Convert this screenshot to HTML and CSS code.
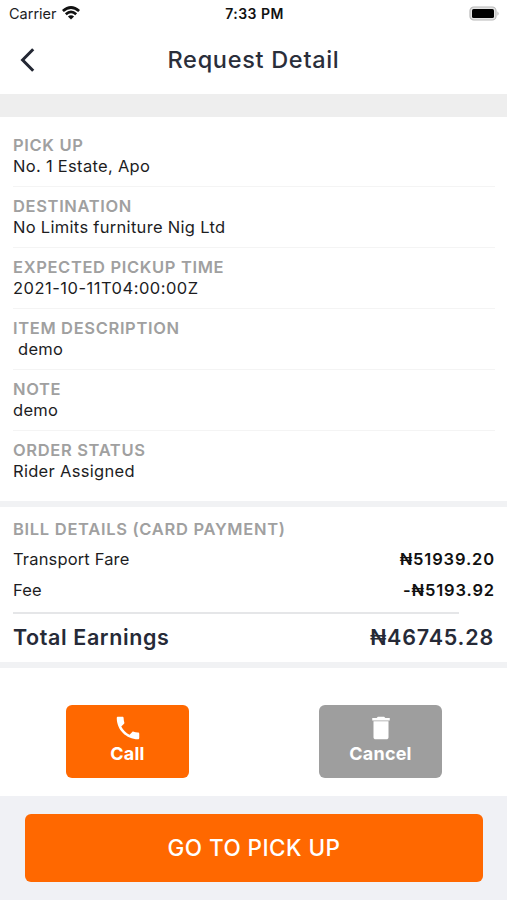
FILE: index.html
```html
<!DOCTYPE html>
<html lang="en">
<head>
<meta charset="utf-8">
<title>Request Detail</title>
<link rel="stylesheet" href="styles.css">
</head>
<body>
<div class="screen">
  <div class="status">
    <div class="carrier"><span class="carrier-name">Carrier</span>
      <svg class="wifi" width="18" height="14" viewBox="0 0 18 14"><g fill="none" stroke="#111" stroke-width="2.7"><path d="M0.9 5.1Q9 -2.1 17.1 5.1"/><path d="M3.8 8.2Q9 3.6 14.2 8.2"/></g><path fill="#111" d="M5.9 10.5Q9 7.8 12.1 10.5L9 13.6Z"/></svg>
    </div>
    <span class="time">7:33 PM</span>
    <svg class="battery" width="31" height="15" viewBox="0 0 31 15"><rect x="1" y="1" width="26" height="13" rx="3.8" fill="#e4e4e4" stroke="#b8b8b8" stroke-width="1.2"/><rect x="3" y="3" width="22" height="9" rx="1.6" fill="#000"/><path d="M28.5 5.2Q30.6 7.5 28.5 9.8Z" fill="#aaa"/></svg>
  </div>
  <header class="header">
    <svg class="back" width="16" height="26" viewBox="0 0 16 26"><path d="M14.2 2.2L3.6 13L14.2 23.8" fill="none" stroke="#232733" stroke-width="3"/></svg>
    <h1 class="title">Request Detail</h1>
  </header>
  <div class="band"></div>
  <main class="details">
    <section class="item"><h2 class="label">PICK UP</h2><p class="value">No. 1 Estate, Apo</p></section>
    <section class="item"><h2 class="label">DESTINATION</h2><p class="value">No Limits furniture Nig Ltd</p></section>
    <section class="item"><h2 class="label">EXPECTED PICKUP TIME</h2><p class="value value-date">2021-10-11T04:00:00Z</p></section>
    <section class="item"><h2 class="label">ITEM DESCRIPTION</h2><p class="value value-indent">demo</p></section>
    <section class="item"><h2 class="label">NOTE</h2><p class="value">demo</p></section>
    <section class="item"><h2 class="label">ORDER STATUS</h2><p class="value">Rider Assigned</p></section>
  </main>
  <section class="bill">
    <h2 class="label">BILL DETAILS (CARD PAYMENT)</h2>
    <div class="row"><span>Transport Fare</span><span class="amount">₦51939.20</span></div>
    <div class="row"><span>Fee</span><span class="amount">-₦5193.92</span></div>
    <div class="rule"></div>
    <div class="total"><span>Total Earnings</span><span class="sum">₦46745.28</span></div>
  </section>
  <div class="actions">
    <button class="action call"><svg width="30" height="30" viewBox="0 0 24 24"><path fill="#fff" d="M6.62 10.79c1.44 2.83 3.76 5.14 6.59 6.59l2.2-2.2c.27-.27.67-.36 1.02-.24 1.12.37 2.33.57 3.57.57.55 0 1 .45 1 1V20c0 .55-.45 1-1 1C10.61 21 3 13.39 3 4c0-.55.45-1 1-1h3.5c.55 0 1 .45 1 1 0 1.25.2 2.45.57 3.57.11.35.03.74-.25 1.02z"/></svg><span>Call</span></button>
    <button class="action cancel"><svg width="30" height="30" viewBox="0 0 24 24"><path fill="#fff" d="M6 19.5c0 .9.8 1.5 1.6 1.5h8.8c.8 0 1.6-.6 1.6-1.5V6.6H6zM19 4h-3.5l-1-1h-5l-1 1H5v2h14z"/></svg><span>Cancel</span></button>
  </div>
  <footer class="footer"><button class="go">GO TO PICK UP</button></footer>
</div>
</body>
</html>
```
FILE: styles.css
```css
* { box-sizing: border-box; }
body { margin: 0; background: #fff; color: #1d1d1f; font-family: Inter, sans-serif; }
h1, h2, p { margin: 0; }
button { border: 0; padding: 0; font-family: inherit; color: #fff; }
svg { display: block; flex: none; }
.screen { width: 507px; height: 900px; display: flex; flex-direction: column; overflow: hidden; }
.status { height: 27px; display: grid; grid-template-columns: 1fr auto 1fr; align-items: center; padding: 0 7px 0 9px; font-size: 14.5px; }
.carrier { display: flex; align-items: center; gap: 5px; }
.wifi { margin-bottom: 2px; }
.time { font-size: 14px; font-weight: 600; color: #111; letter-spacing: .45px; }
.battery { justify-self: end; }
.header { height: 67px; display: grid; grid-template-columns: 40px 1fr 40px; align-items: center; padding: 0 19px 2px; }
.title { font-size: 23.5px; line-height: 30px; font-weight: 500; letter-spacing: .7px; text-align: center; color: #2a2e3a; }
.band { height: 23px; background: #eee; }
.details { height: 384px; padding: 9px 12px 0 13px; }
.item { height: 61px; padding-top: 9px; border-bottom: 1px solid #f4f4f4; }
.item:last-child { border-bottom: 0; }
.label { font-size: 16.5px; line-height: 21px; font-weight: 600; letter-spacing: .65px; color: #a0a0a0; white-space: nowrap; }
.value { font-size: 16.5px; line-height: 21px; letter-spacing: .3px; }
.value-date { letter-spacing: .5px; }
.value-indent { padding-left: 5px; }
.bill { height: 167px; padding: 12px 13px 0; border-top: 6px solid #f1f2f4; border-bottom: 6px solid #f1f2f4; }
.bill .label { margin-bottom: 3px; letter-spacing: .7px; }
.row { height: 31px; display: flex; justify-content: space-between; align-items: center; font-size: 16.5px; letter-spacing: .15px; }
.amount { font-weight: 600; color: #111; letter-spacing: .87px; margin-right: -1px; }
.rule { width: 446px; height: 2px; margin-top: 7px; background: #e5e6e8; }
.total { height: 46px; display: flex; justify-content: space-between; align-items: center; font-size: 21.5px; font-weight: 600; color: #262a37; letter-spacing: .6px; }
.sum { letter-spacing: .8px; }
.actions { height: 128px; display: flex; justify-content: space-between; align-items: flex-start; padding: 37px 65px 0 66px; }
.action { width: 123px; height: 73px; border-radius: 6px; padding-top: 8px; display: flex; flex-direction: column; align-items: center; font-size: 18px; line-height: 22px; font-weight: 700; letter-spacing: .2px; }
.call, .go { background: #ff6800; }
.cancel { background: #9e9e9e; }
.footer { flex: 1; padding: 18px 24px 18px 25px; background: #f0f1f5; display: flex; }
.go { flex: 1; border-radius: 6px; padding-bottom: 1px; font-size: 22.5px; font-weight: 500; letter-spacing: .45px; }
```
